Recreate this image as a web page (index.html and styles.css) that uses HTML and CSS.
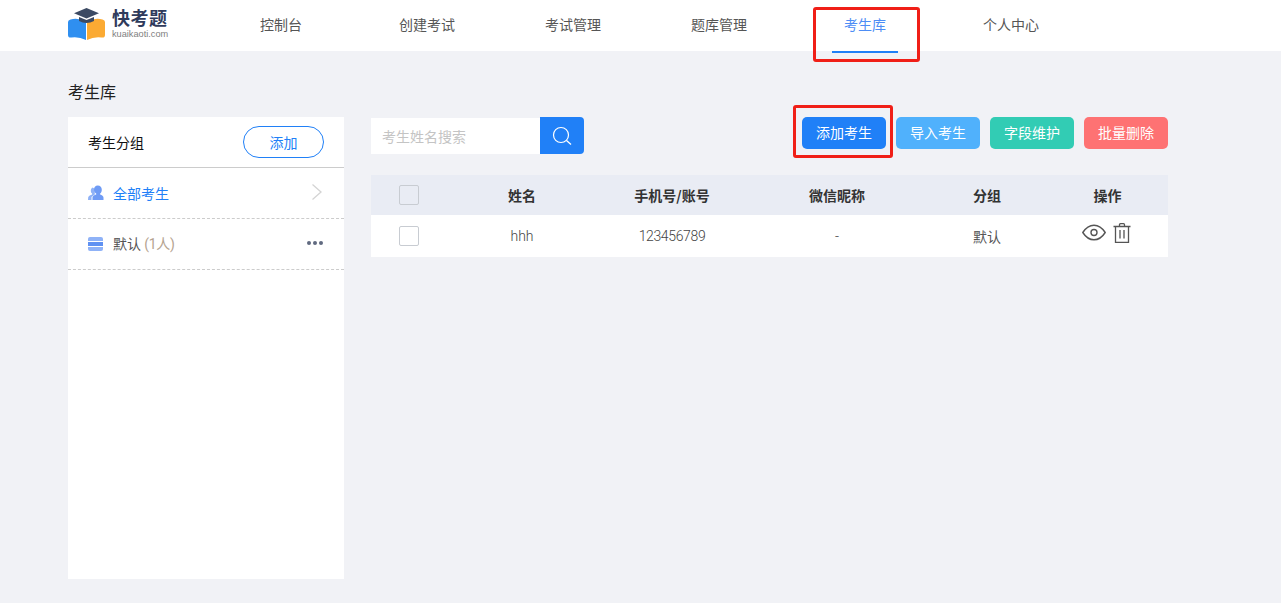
FILE: index.html
```html
<!DOCTYPE html>
<html lang="zh">
<head>
<meta charset="utf-8">
<title>考生库</title>
<link rel="stylesheet" href="styles.css">
</head>
<body>
<header class="topbar">
  <div class="logo">
    <svg class="logo-mark" width="37" height="32" viewBox="0 0 37 32">
      <path d="M2.500 11.500 Q10 9 18 14 V32 Q11 28.500 3.500 29.500 Q0 30 0 27 V14 Q0 12 2.500 11.500Z" fill="#2f8ff0"/>
      <path d="M34.500 11.500 Q27 9 19 14 V32 Q26 28.500 33.500 29.500 Q37 30 37 27 V14 Q37 12 34.500 11.500Z" fill="#fbaa33"/>
      <path d="M18.500 0 L31 5.200 L18.500 10.400 L6 5.200Z" fill="#3c4a63"/>
      <path d="M11 9 L18.500 12 L26 9 V13 Q18.500 17 11 13Z" fill="#3c4a63"/>
    </svg>
    <div class="logo-text">
      <span class="logo-name">快考题</span>
      <span class="logo-url">kuaikaoti.com</span>
    </div>
  </div>
  <nav class="nav">
    <a class="nav-item">控制台</a>
    <a class="nav-item">创建考试</a>
    <a class="nav-item">考试管理</a>
    <a class="nav-item">题库管理</a>
    <a class="nav-item active">考生库</a>
    <a class="nav-item">个人中心</a>
  </nav>
</header>

<main class="page">
  <h1 class="page-title">考生库</h1>
  <div class="columns">
    <aside class="sidebar">
      <div class="side-head">
        <span class="side-title">考生分组</span>
        <button class="outline-btn">添加</button>
      </div>
      <div class="side-row current">
        <svg class="side-icon" width="16" height="16" viewBox="0 0 16 16">
          <path d="M4.800 2.500C3.500 3 2.800 4.300 2.800 5.700c0 1.200.5 2.300 1.300 2.900v.8C2.600 10 .7 10.800.2 12.200L0 15h3.500v-3l3.300-2.500V4Z" fill="#8fb2f7"/>
          <path d="M9.800 0.500c2.500 0 4 1.800 4 4.200 0 1.700-.7 3.100-1.700 3.900v1c1.100.4 2.400 1 3 1.900.2.400.4.800.4 1.300V15H4.500v-2.200c0-.5.100-.9.400-1.300.6-.9 2.200-1.500 3.300-1.900v-1C7.200 7.800 6 6.400 6 4.700 6 2.300 7.300.5 9.800.5Z" fill="#6f9bf5"/>
        </svg>
        <span class="side-label">全部考生</span>
        <svg class="chevron" width="12" height="18" viewBox="0 0 12 18"><path d="M1.500 1.500 L10 9 L1.500 16.500" fill="none" stroke="#d4d4d4" stroke-width="1.300"/></svg>
      </div>
      <div class="side-row">
        <svg class="side-icon" width="16" height="16" viewBox="0 0 16 16">
          <path d="M0 3Q0 1 2 1H13Q15 1 15 3V5H0Z" fill="#8fb2f7"/>
          <rect x="0" y="6" width="15" height="4" fill="#5f91f2"/>
          <path d="M0 11H15V13Q15 15 13 15H2Q0 15 0 13Z" fill="#8fb2f7"/>
        </svg>
        <span class="side-label">默认 <span class="count">(1人)</span></span>
        <span class="dots"><i></i><i></i><i></i></span>
      </div>
    </aside>

    <section class="content">
      <div class="toolbar">
        <div class="search">
          <input class="search-input" type="text" placeholder="考生姓名搜索">
          <button class="search-btn" aria-label="搜索">
            <svg width="20" height="20" viewBox="0 0 20 20"><circle cx="9" cy="9" r="7.500" fill="none" stroke="#fff" stroke-width="1.200"/><path d="M14.500 14.500 L19 18.500" stroke="#fff" stroke-width="1.300" fill="none"/></svg>
          </button>
        </div>
        <div class="actions">
          <button class="btn btn-blue">添加考生</button>
          <button class="btn btn-sky">导入考生</button>
          <button class="btn btn-teal">字段维护</button>
          <button class="btn btn-red">批量删除</button>
        </div>
      </div>
      <div class="table">
        <div class="tr thead">
          <div class="td"><span class="check"></span></div>
          <div class="td">姓名</div>
          <div class="td">手机号/账号</div>
          <div class="td">微信昵称</div>
          <div class="td">分组</div>
          <div class="td">操作</div>
        </div>
        <div class="tr tbody">
          <div class="td"><span class="check blank"></span></div>
          <div class="td latin">hhh</div>
          <div class="td latin digits">123456789</div>
          <div class="td latin">-</div>
          <div class="td group-cell">默认</div>
          <div class="td ops">
            <svg width="24" height="17" viewBox="0 0 24 17"><path d="M.8 8.500C3.800 3.800 7.500 1.200 12 1.200S20.200 3.800 23.200 8.500C20.200 13.200 16.500 15.800 12 15.800S3.800 13.200.8 8.500Z" fill="none" stroke="#555" stroke-width="1.400"/><circle cx="12" cy="8.500" r="3" fill="none" stroke="#555" stroke-width="1.400"/></svg>
            <svg class="trash" width="18" height="20" viewBox="0 0 18 20"><path d="M.5 3.500H17.500M6.500 3.500V1.800Q6.500 .7 7.500 .7H10.500Q11.500 .7 11.500 1.800V3.500M2.500 3.500V19.500H15.500V3.500M7 7V15.500M11 7V15.500" fill="none" stroke="#555" stroke-width="1.300"/></svg>
          </div>
        </div>
      </div>
    </section>
  </div>
</main>
<div class="mark mark-nav"></div>
<div class="mark mark-btn"></div>
</body>
</html>
```

FILE: styles.css
```css
* { box-sizing: border-box; }
html, body { margin: 0; padding: 0; }
body {
  height: 603px;
  overflow: hidden;
  position: relative;
  background: #f1f2f6;
  color: #555;
  font-family: "Noto Sans CJK SC", "Noto Sans", sans-serif;
  font-size: 14px;
}
button { font-family: inherit; cursor: pointer; }

.topbar {
  height: 51px;
  background: #fff;
  display: flex;
  padding-left: 68px;
}
.logo { width: 140px; display: flex; align-items: flex-start; padding-top: 8px; gap: 7px; }
.logo-mark { flex: none; }
.logo-text { display: flex; flex-direction: column; }
.logo-name { font-size: 18px; line-height: 18px; font-weight: 700; color: #2f3b5c; letter-spacing: .5px; }
.logo-url { font-size: 9.200px; line-height: 11px; margin-top: 3px; color: #808080; font-family: "Liberation Sans", sans-serif; }

.nav { display: flex; }
.nav-item {
  width: 146px;
  display: flex;
  justify-content: center;
  line-height: 48px;
  color: #555;
  position: relative;
}
.nav-item.active { color: #4d8df5; }
.nav-item.active::after {
  content: "";
  position: absolute;
  left: 40px;
  width: 66px;
  top: 51px;
  height: 2px;
  background: #2080f7;
}

.page { padding: 30px 0 0 68px; width: 1168px; }
.page-title { margin: 0 0 15px; font-size: 16px; line-height: 21px; font-weight: 400; color: #222; }
.columns { display: flex; gap: 27px; }

.sidebar { width: 276px; height: 462px; background: #fff; }
.side-head {
  height: 51px;
  display: flex;
  align-items: center;
  justify-content: space-between;
  padding: 0 20px;
  border-bottom: 1px solid #ccc;
}
.side-title { font-size: 14px; color: #111; }
.outline-btn {
  width: 81px;
  height: 32px;
  background: #fff;
  border: 1px solid #2080f7;
  border-radius: 16px;
  color: #2080f7;
  font-size: 14px;
  padding: 0;
}
.side-row {
  height: 51px;
  display: flex;
  align-items: center;
  padding: 0 20px;
  border-bottom: 1px dashed #ccc;
  color: #555;
}
.side-row.current { color: #2080f7; }
.side-icon { flex: none; margin-right: 9px; }
.side-label { flex: 1; line-height: 20px; margin-top: -1px; }
.count { color: #b5a38f; font-family: "Roboto", "Noto Sans CJK SC", sans-serif; letter-spacing: -.3px; }
.chevron { margin-right: 1px; margin-top: -3px; }
.dots { display: flex; gap: 2px; margin-right: 1px; margin-top: -2px; }
.dots i { width: 4px; height: 4px; border-radius: 50%; background: #606a80; display: block; }

.content { width: 797px; }
.toolbar { height: 58px; display: flex; justify-content: space-between; align-items: flex-start; }
.search { display: flex; width: 213px; height: 37px; }
.search-input {
  width: 169px;
  height: 36px;
  margin-top: 1px;
  border: 0;
  outline: 0;
  background: #fff;
  padding: 0 11px;
  font: inherit;
  color: #555;
}
.search-input::placeholder { color: #c4c4c4; opacity: 1; }
.search-btn {
  width: 44px;
  height: 37px;
  border: 0;
  padding: 0;
  background: #2080f7;
  border-radius: 0 4px 4px 0;
  display: flex;
  align-items: center;
  justify-content: center;
}
.actions { display: flex; gap: 10px; }
.btn {
  width: 84px;
  height: 32px;
  border: 0;
  border-radius: 5px;
  color: #fff;
  font-size: 14px;
  padding: 0 0 2px;
}
.btn-blue { background: #2080f7; }
.btn-sky { background: #50b1fc; }
.btn-teal { background: #32ccb4; }
.btn-red { background: #fe7273; }

.table { width: 797px; }
.tr { display: grid; grid-template-columns: 76px 150px 150px 180px 120px 121px; align-items: center; text-align: center; }
.td { display: flex; align-items: center; justify-content: center; }
.thead { height: 40px; background: #e9ecf4; color: #333; font-weight: 700; font-size: 14px; }
.tbody { height: 42px; background: #fff; color: #555; }
.latin { font-family: "Roboto", "Noto Sans", sans-serif; font-weight: 300; color: #444; margin-top: -1px; }
.digits { letter-spacing: -.35px; }
.group-cell { margin-top: -1px; }
.check { width: 20px; height: 20px; border: 1px solid #c8ccd2; border-radius: 2px; background: transparent; display: block; }
.check.blank { background: #fff; }
.ops { gap: 7px; margin-top: -7px; margin-left: -2px; }

.mark { position: absolute; border: 3px solid #f01f17; border-radius: 3px; pointer-events: none; }
.mark-nav { left: 813px; top: 7px; width: 107px; height: 55px; }
.mark-btn { left: 793px; top: 105px; width: 100px; height: 53px; }
```
